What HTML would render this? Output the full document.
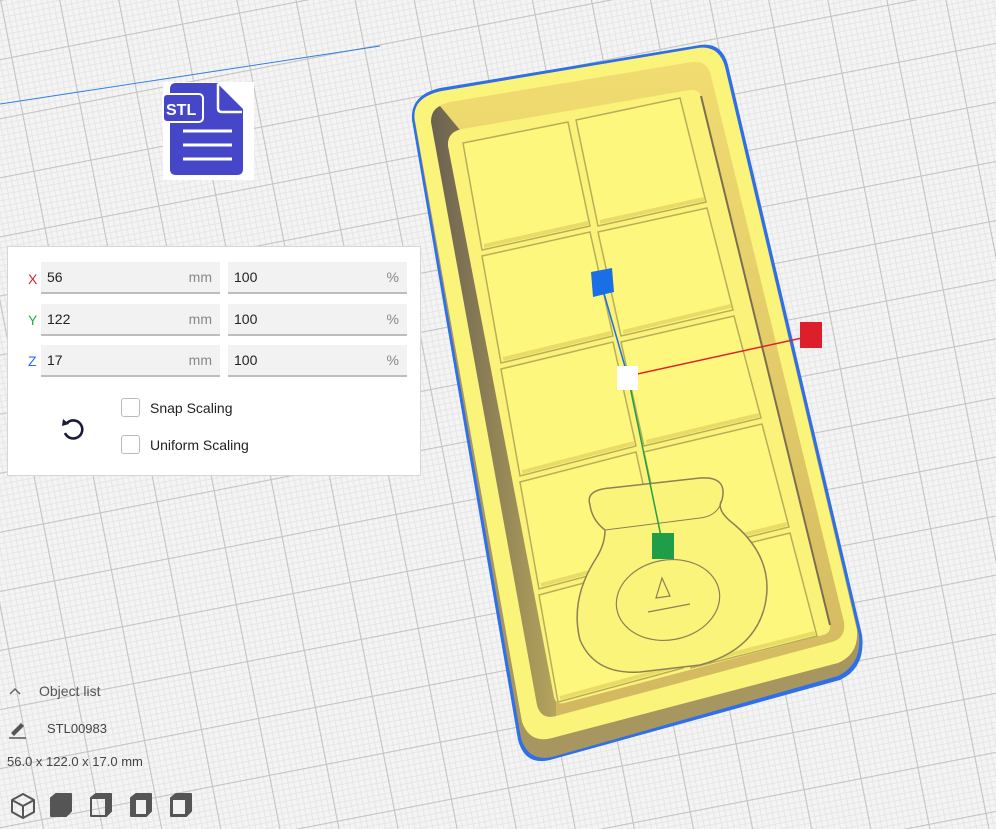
<!DOCTYPE html>
<html><head><meta charset="utf-8"><style>
html,body{margin:0;padding:0;width:996px;height:829px;overflow:hidden;background:#f3f3f3;font-family:"Liberation Sans","DejaVu Sans",sans-serif}
#bg{position:absolute;left:0;top:0}
.panel{position:absolute;left:7px;top:246px;width:414px;height:230px;background:#fff;border:1px solid #d6d6d6;box-sizing:border-box}
.lbl{position:absolute;left:20px;font-size:14px}
.f{position:absolute;height:32px;background:#f2f2f2;border-bottom:2px solid #bdbdbd;box-sizing:border-box;font-size:14px;color:#222;line-height:31px;padding-left:6px}
.f span{position:absolute;right:8px;color:#888}
.cb{position:absolute;left:113px;width:19px;height:19px;border:1px solid #bbb;border-radius:3px;box-sizing:border-box;background:#fff}
.ct{position:absolute;left:142px;font-size:14px;color:#222}
.t{position:absolute;font-size:13px;color:#444}
</style></head><body>
<svg id="bg" width="996" height="829" viewBox="0 0 996 829">
<defs>
<pattern id="g" width="58" height="58" patternUnits="userSpaceOnUse" patternTransform="rotate(-11)">
<rect width="58" height="58" fill="#f4f4f4"/>
<path d="M0 5.8H58M0 11.6H58M0 17.4H58M0 23.2H58M0 29H58M0 34.8H58M0 40.6H58M0 46.4H58M0 52.2H58M5.8 0V58M11.6 0V58M17.4 0V58M23.2 0V58M29 0V58M34.8 0V58M40.6 0V58M46.4 0V58M52.2 0V58" stroke="#e6e6e6" stroke-width="1"/>
<path d="M0 0.5H58M0.5 0V58" stroke="#c4c4c4" stroke-width="1.3"/>
</pattern>
<linearGradient id="lw" x1="0" y1="0" x2="1" y2="0"><stop offset="0" stop-color="#6a6150"/><stop offset="1" stop-color="#b5a45c"/></linearGradient>
<linearGradient id="bw" x1="0" y1="0" x2="0" y2="1"><stop offset="0" stop-color="#f0dc70"/><stop offset="1" stop-color="#d2b860"/></linearGradient>
</defs>
<rect width="996" height="829" fill="url(#g)"/>
<path d="M0 104 L380 46" stroke="#2f7fe6" stroke-width="1"/>
<!-- tray -->
<path d="M412 120 Q410 95 440 88 L700 45 Q722 42 728 65 L862 635 Q866 668 840 680 L550 760 Q525 766 518 740 Z" fill="#2f6fe8"/>
<path d="M414.5 120 Q413 97 442 91 L698 48 Q719 45 725 67 L859 635 Q862 664 838 676 L552 757 Q528 762 521 738 Z" fill="#a89660"/>
<path d="M414.5 118 Q413 97 442 91 L698 48 Q719 45 725 67 L857 630 Q859 654 838 663 L552 738 Q530 744 522 722 Z" fill="#fbf47a"/>
<!-- cavity back wall -->
<path d="M431 122 Q431 106 450 102 L692 62 Q707 60 711 76 L844 622 Q846 638 832 642 L556 716 Q541 720 537 705 Z" fill="url(#bw)"/>
<!-- left wall -->
<path d="M431 122 Q431 110 440 106 L460 130 Q450 133 450 142 L556 702 L556 716 Q541 720 537 705 Z" fill="url(#lw)"/>
<!-- floor -->
<path d="M448 146 Q447 132 462 129 L690 90 Q698 89 701 96 L830 625 Q831 633 823 635 L564 703 Q556 705 554 697 Z" fill="#fbf27a"/>
<path d="M701 96 L830 625" stroke="#7a7050" stroke-width="2"/>
<g fill="#fdf77e" stroke="#b9ad58" stroke-width="1.5">
<polygon points="463,143 568,122 590,226 482,250"/>
<polygon points="576,120 680,98 706,202 598,226"/>
<polygon points="482,256 590,232 613,336 501,363"/>
<polygon points="598,232 707,208 733,310 621,336"/>
<polygon points="501,369 613,342 636,446 520,476"/>
<polygon points="621,342 734,316 761,418 644,446"/>
<polygon points="520,482 636,452 659,557 539,589"/>
<polygon points="644,452 762,424 789,527 667,557"/>
<polygon points="539,595 659,563 683,668 558,702"/>
<polygon points="667,563 790,533 817,636 691,668"/>
</g>
<g stroke="#e8dc66" stroke-width="4" fill="none">
<path d="M484 246 L588 223 M600 222 L704 199 M503 359 L611 333 M623 332 L731 306 M522 472 L634 443 M646 442 L759 415 M541 585 L657 554 M669 553 L787 524 M560 698 L681 665 M693 664 L815 633"/>
</g>
<!-- pot -->
<path d="M590 505 Q585 490 610 488 L700 478 Q728 476 722 500 Q715 510 735 525 Q775 560 765 605 Q755 650 700 665 L640 672 Q595 675 580 640 Q570 600 595 560 Q605 545 605 530 Q592 520 590 505 Z" fill="#fbf47a" stroke="#8c8055" stroke-width="1.5"/>
<path d="M605 530 L700 518 Q718 516 722 500" fill="none" stroke="#8c8055" stroke-width="1"/>
<ellipse cx="668" cy="600" rx="52" ry="40" fill="none" stroke="#8c8055" stroke-width="1.2" transform="rotate(-10 668 600)"/>
<path d="M662 578 L670 596 L656 598 Z M648 612 L690 604" fill="none" stroke="#8c8055" stroke-width="1.2"/>
<!-- gizmo -->
<path d="M603 290 L628 377" stroke="#1a6fe6" stroke-width="1.5"/>
<path d="M628 376 L811 336" stroke="#e0202a" stroke-width="1.5"/>
<path d="M628 377 L663 546" stroke="#20a048" stroke-width="1.5"/>
<polygon points="591,272 612,268 614,292 593,297" fill="#1a6fe6"/>
<rect x="617" y="366" width="21" height="24" fill="#fff"/>
<rect x="800" y="322" width="22" height="26" fill="#dd1f2b"/>
<rect x="652" y="533" width="22" height="26" fill="#1f9e4a"/>
<!-- STL icon -->
<rect x="163" y="82" width="91" height="98" fill="#fff"/>
<path d="M176 83 H217 L243 109 V169 Q243 175 237 175 H176 Q170 175 170 169 V89 Q170 83 176 83 Z" fill="#4646c8"/>
<path d="M218 84 V108 Q218 112 222 112 H242" fill="none" stroke="#fff" stroke-width="2.5"/>
<rect x="163" y="94" width="40" height="28" rx="4" fill="#4646c8" stroke="#fff" stroke-width="2"/>
<text x="166" y="115" font-family="Liberation Sans" font-weight="bold" font-size="16" fill="#fff">STL</text>
<path d="M183 131 H232 M183 145 H232 M183 159 H232" stroke="#fff" stroke-width="3"/>
<!-- bottom icons -->
<g stroke="#555" stroke-width="2" fill="none" stroke-linejoin="round">
<path d="M12 800 L23 794 L34 800 V812 L23 818 L12 812 Z M12 800 L23 806 L34 800 M23 806 V818"/>
<path d="M51 798 L56 794 H71 V811 L66 816 H51 Z" fill="#555"/>
<path d="M91 798 L96 794 H111 V811 L106 816 H91 Z M91 798 H106 V816 M106 798 L111 794" />
<path d="M91 798 L96 794 H111 L106 798 Z M106 798 L111 794 V811 L106 816 Z" fill="#555"/>
<path d="M131 798 L136 794 H151 V811 L146 816 H131 Z" fill="#555"/><path d="M136 800 H146 V814 H136 Z" fill="#f2f2f2" stroke="none"/>
<path d="M171 798 L176 794 H191 V811 L186 816 H171 Z" fill="#555"/><path d="M173 800 H185 V814 H173 Z" fill="#f2f2f2" stroke="none"/>
</g>
<path d="M10 694 L15 689 L20 694" stroke="#666" stroke-width="1.5" fill="none"/>
<path d="M11 733 L21 723 L24 726 L14 736 Z" fill="#555"/><path d="M9 738 H26" stroke="#555" stroke-width="1.5"/>
</svg>
<div class="panel">
<div class="lbl" style="top:24px;color:#e0202a">X</div>
<div class="lbl" style="top:65px;color:#2fa94d">Y</div>
<div class="lbl" style="top:106px;color:#2a6fe6">Z</div>
<div class="f" style="left:33px;top:15px;width:179px">56<span>mm</span></div>
<div class="f" style="left:220px;top:15px;width:179px">100<span>%</span></div>
<div class="f" style="left:33px;top:57px;width:179px">122<span>mm</span></div>
<div class="f" style="left:220px;top:57px;width:179px">100<span>%</span></div>
<div class="f" style="left:33px;top:98px;width:179px">17<span>mm</span></div>
<div class="f" style="left:220px;top:98px;width:179px">100<span>%</span></div>
<svg style="position:absolute;left:52px;top:168px" width="26" height="28" viewBox="0 0 26 28"><path d="M7 8 A9 9 0 1 1 5 18" fill="none" stroke="#1a1a3a" stroke-width="2.6"/><path d="M3 4 L9 9 L2 11 Z" fill="#1a1a3a"/></svg>
<div class="cb" style="top:151px"></div><div class="ct" style="top:153px">Snap Scaling</div>
<div class="cb" style="top:188px"></div><div class="ct" style="top:190px">Uniform Scaling</div>
</div>
<div class="t" style="left:39px;top:683px;font-size:14px;color:#555">Object list</div>
<div class="t" style="left:47px;top:721px">STL00983</div>
<div class="t" style="left:7px;top:754px">56.0 x 122.0 x 17.0 mm</div>
</body></html>
